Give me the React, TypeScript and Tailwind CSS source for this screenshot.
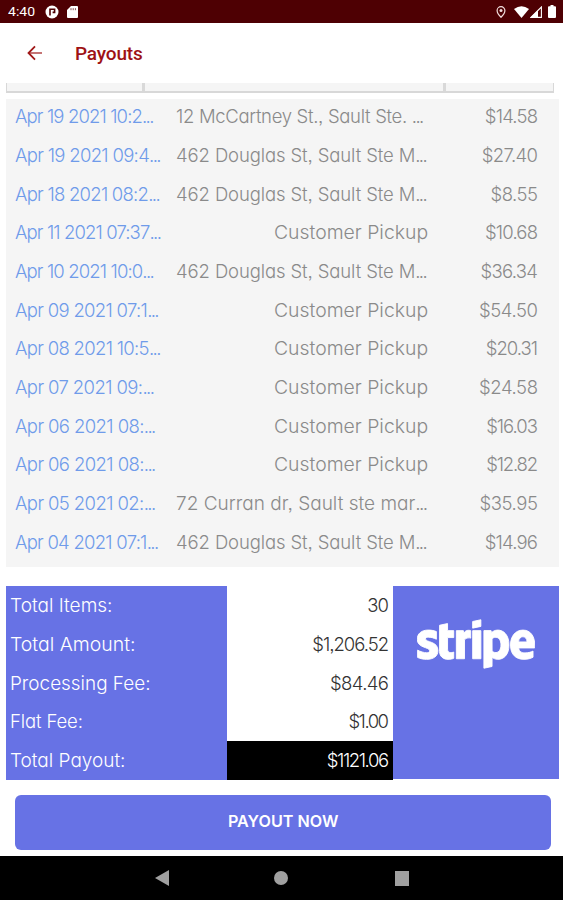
import { useLayoutEffect, useRef } from "react";
import { FaStripe } from "react-icons/fa";

const geo = "font-['Inter','Liberation_Sans',sans-serif] [font-feature-settings:'cv11','ss03']";

/** Single line of text fitted to a width: wide targets stretch the glyphs, narrow ones tighten the tracking. */
function Fit({ text, width, className = "" }: { text: string; width: number; className?: string }) {
  const ref = useRef<HTMLSpanElement>(null);
  const dots = text.endsWith("...");
  const body = dots ? text.slice(0, -3) : text;
  useLayoutEffect(() => {
    const el = ref.current;
    if (!el) return;
    el.style.letterSpacing = "0px";
    el.style.transform = "none";
    el.style.marginRight = "0px";
    const natural = el.offsetWidth;
    const stretch = Math.min(1.12, Math.max(1, width / natural));
    const target = width / stretch;
    const gap = (target - natural) / (dots ? body.length : body.length - 1);
    el.style.letterSpacing = `${gap}px`;
    el.style.transformOrigin = "left";
    el.style.transform = stretch > 1 ? `scaleX(${stretch})` : "none";
    el.style.marginRight = `${width - target - (dots ? 0 : gap)}px`;
  }, [text, width, body, dots]);
  return (
    <span ref={ref} className={`inline-block whitespace-pre ${className}`}>
      {body}
      {dots && <span className="tracking-[-1.6px]">...</span>}
    </span>
  );
}

type Row = [string, number, string, number, string, number];

const rows: Row[] = [
  ["Apr 19 2021 10:2...", 138, "12 McCartney St., Sault Ste. ...", 247, "$14.58", 53],
  ["Apr 19 2021 09:4...", 145, "462 Douglas St, Sault Ste M...", 250, "$27.40", 56],
  ["Apr 18 2021 08:2...", 144, "462 Douglas St, Sault Ste M...", 250, "$8.55", 48],
  ["Apr 11 2021 07:37...", 145, "Customer Pickup", 154, "$10.68", 53],
  ["Apr 10 2021 10:0...", 138, "462 Douglas St, Sault Ste M...", 250, "$36.34", 57.5],
  ["Apr 09 2021 07:1...", 143, "Customer Pickup", 154, "$54.50", 59],
  ["Apr 08 2021 10:5...", 145, "Customer Pickup", 154, "$20.31", 52],
  ["Apr 07 2021 09:...", 138, "Customer Pickup", 154, "$24.58", 59],
  ["Apr 06 2021 08:...", 140, "Customer Pickup", 154, "$16.03", 52],
  ["Apr 06 2021 08:...", 140, "Customer Pickup", 154, "$12.82", 52],
  ["Apr 05 2021 02:...", 140, "72 Curran dr, Sault ste mar...", 250, "$35.95", 59],
  ["Apr 04 2021 07:1...", 143, "462 Douglas St, Sault Ste M...", 250, "$14.96", 53],
];

const totals: [string, number, string, number][] = [
  ["Total Items:", 103, "30", 22],
  ["Total Amount:", 125, "$1,206.52", 77],
  ["Processing Fee:", 140, "$84.46", 59],
  ["Flat Fee:", 73, "$1.00", 41],
  ["Total Payout:", 116, "$1121.06", 62],
];

function StatusBar() {
  return (
    <header className="flex h-[23px] items-center bg-[#4e0003] pl-2 pr-[6px] text-white">
      <Fit text="4:40" width={27} className="font-['Roboto',sans-serif] text-[13.5px] font-normal leading-none" />
      <svg className="ml-[10px] h-[14px] w-[14px]" viewBox="0 0 14 14">
        <circle cx="7" cy="7" r="6.5" fill="#fff" />
        <path d="M5 10.600V4.300h4.600v3.100H7.600" fill="none" stroke="#4e0003" strokeWidth="1.600" />
      </svg>
      <svg className="ml-[8px] h-[12px] w-[11px]" viewBox="0 0 11 12">
        <path d="M4 0h6a1 1 0 0 1 1 1v10a1 1 0 0 1-1 1H1a1 1 0 0 1-1-1V4z" fill="#fff" />
        <path d="M4 2.200v2M6.200 2.200v2M8.400 2.200v2" stroke="#4e0003" strokeWidth=".7" />
      </svg>
      <svg className="ml-auto h-[12px] w-[10px]" viewBox="0 0 10 12">
        <path d="M5 .7a3.900 3.900 0 0 0-3.900 3.900C1.100 7.600 5 11.300 5 11.300s3.900-3.700 3.900-6.700A3.900 3.900 0 0 0 5 .7z" fill="none" stroke="#f3dede" strokeWidth="1.200" />
        <circle cx="5" cy="4.600" r="1.500" fill="#f3dede" />
      </svg>
      <svg className="ml-[8px] h-[12px] w-[15px]" viewBox="0 0 15 12">
        <path d="M0 3Q7.500-2.500 15 3L7.500 12z" fill="#fff" />
      </svg>
      <svg className="ml-[1px] h-[12px] w-[12px]" viewBox="0 0 12 12">
        <path d="M11.400 1v10.400H1z" fill="none" stroke="#fff" strokeWidth="1.100" />
        <path d="M8 4.200V11.500H.5z" fill="#fff" />
      </svg>
      <svg className="ml-[6px] mr-[1px] h-[13px] w-[8px]" viewBox="0 0 8 13">
        <path d="M2.500 0h3v1.300H7a1 1 0 0 1 1 1V12a1 1 0 0 1-1 1H1a1 1 0 0 1-1-1V2.300a1 1 0 0 1 1-1h1.500z" fill="#fff" />
      </svg>
    </header>
  );
}

export default function App() {
  return (
    <div className="flex h-[900px] w-[563px] flex-col overflow-hidden bg-white">
      <StatusBar />

      <div className="flex h-[60px] items-center pl-[27px]">
        <svg className="h-[16px] w-[15px]" viewBox="0 0 15 16" fill="none" stroke="#a01818">
          <path d="M8 1.300L1.500 8L8 14.700" strokeWidth="1.800" />
          <path d="M1.500 8H15" strokeWidth="1.200" />
        </svg>
        <Fit text="Payouts" width={68} className="ml-[33px] mt-[2px] font-['Roboto',sans-serif] text-[19px] font-medium leading-6 text-[#9e1214]" />
      </div>

      <div className="ml-[6px] flex h-[10px] w-[548px] border-x border-b-2 border-[#d8d8d8] bg-[#f5f5f5]">
        <div className="w-[138px] border-r-[3px] border-[#d9d9d9]" />
        <div className="w-[301px] border-r-[3px] border-[#d9d9d9]" />
      </div>

      <div className="ml-[6px] mt-[6px] h-[468px] w-[553px] bg-[#f5f5f5]">
        {rows.map(([date, dw, place, pw, amount, aw], i) => (
          <div key={i} className={`flex h-[38.67px] items-start pl-[9px] pr-[21px] pt-[4.3px] text-[18.5px] font-light leading-[26px] ${geo}`}>
            <div className="w-[161px] text-[#6f9bea]">
              <Fit text={date} width={dw} />
            </div>
            <div className={`w-[252px] ${place === "Customer Pickup" ? "text-right" : ""} text-[#8a8a8a]`}>
              <Fit text={place} width={pw} />
            </div>
            <div className="flex-1 text-right text-[#8a8a8a]">
              <Fit text={amount} width={aw} />
            </div>
          </div>
        ))}
      </div>

      <div className="ml-[6px] mt-[19px] flex h-[195px] w-[553px]">
        <div className={`w-[387px] text-[18.5px] font-light leading-[38px] ${geo}`}>
          {totals.map(([label, lw, value, vw], i) => (
            <div key={label} className="flex h-[38.8px]">
              <div className="w-[221px] bg-[#6772e5] pl-[4px] text-white">
                <Fit text={label} width={lw} />
              </div>
              <div className={`flex-1 pr-[4px] text-right ${i === 4 ? "bg-black text-white" : "bg-white text-[#333]"}`}>
                <Fit text={value} width={vw} />
              </div>
            </div>
          ))}
        </div>
        <div className="flex h-[193px] flex-1 justify-center bg-[#6772e5]">
          <FaStripe className="mt-[11px] h-[94px] w-[118px] stroke-white stroke-[5px] text-white" />
        </div>
      </div>

      <button className={`ml-[15px] mt-[14px] flex h-[55px] w-[536px] items-center justify-center rounded-[6px] bg-[#6772e5] text-[16px] font-semibold text-white ${geo}`}>
        <Fit text="PAYOUT NOW" width={110} className="-mt-[3px]" />
      </button>

      <nav className="mt-auto flex h-[44px] items-center bg-black pl-[155px]">
        <svg className="h-[16px] w-[14px]" viewBox="0 0 14 16">
          <path d="M14 0v16L0 8z" fill="#a0a0a0" />
        </svg>
        <div className="ml-[105px] h-[14px] w-[14px] rounded-full bg-[#a0a0a0]" />
        <div className="ml-[107px] h-[15px] w-[14px] bg-[#a0a0a0]" />
      </nav>
    </div>
  );
}
